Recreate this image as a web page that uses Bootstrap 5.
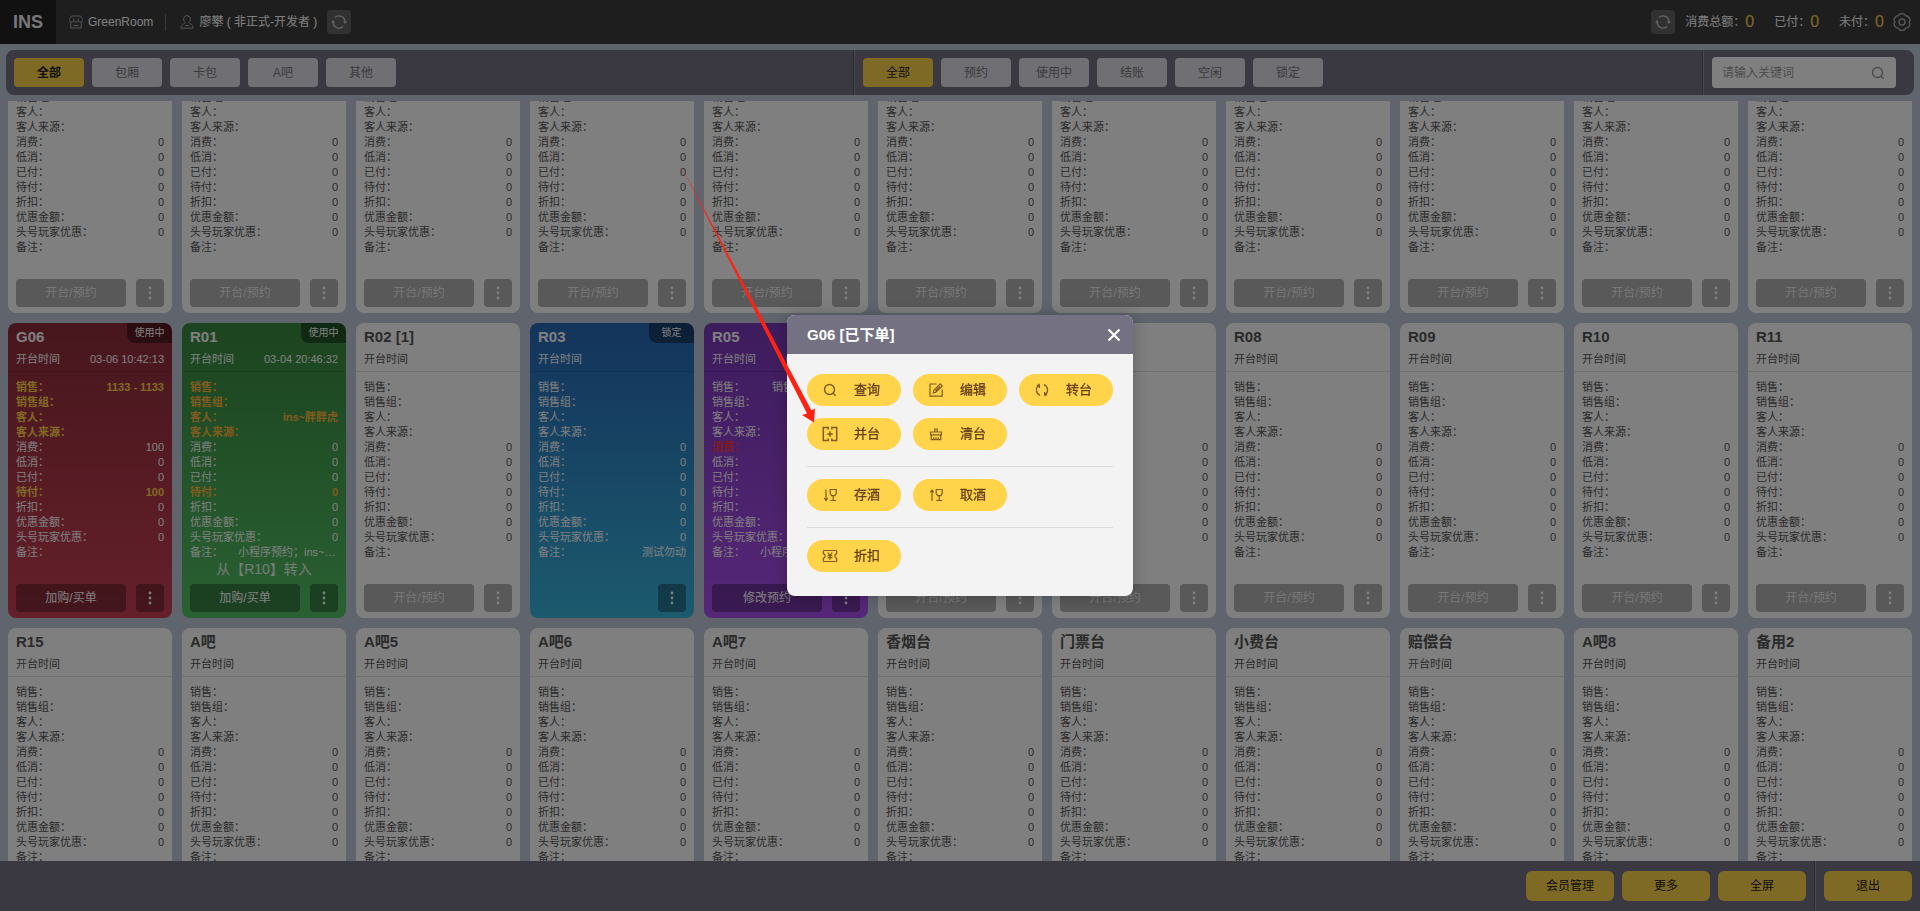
<!DOCTYPE html>
<html lang="zh-CN">
<head>
<meta charset="utf-8">
<meta name="viewport" content="width=device-width, initial-scale=1">
<title>INS GreenRoom</title>
<link rel="stylesheet" href="https://cdn.jsdelivr.net/npm/bootstrap@5.3.0/dist/css/bootstrap.min.css">
<style>
  body { font-family: "Liberation Sans", "Noto Sans CJK SC", sans-serif; font-size: 12px; line-height: 18px; background: #c0c8da; color: #555; }
  svg { display: block; fill: none; stroke: currentColor; }
  .btn { font-size: 12px; line-height: 18px; padding: 0; border: 0; }

  .topbar { height: 44px; background: #3c3c3c; color: #fff; }
  .brand { width: 56px; background: #222; font-size: 18px; color: #eee; }
  .store { gap: 4px; padding: 0 12px; }
  .account { gap: 5px; padding: 0 10px 0 14px; }
  .v-line { width: 1px; height: 17px; background: #777; }
  .icon-soft { color: #aaa; }
  .btn-reload { width: 24px; height: 24px; border-radius: 4px; background: #636363; color: #c4c4c4; }
  .btn-reload:hover { background: #707070; color: #fff; }
  .amount { font-size: 16px; color: #ffd44b; }
  .sums { gap: 20px; padding: 0 8px 0 10px; }

  .filterbar { height: 45px; margin: 6px; border-radius: 8px; background: #747285; }
  .filter-group { flex: 1; padding: 0 8px; }
  .divide { border-left: 1px solid #55545f; box-shadow: inset 1px 0 #94939c; }
  .filter-group.divide, .search-group { padding-left: 9px; }
  .search-group { padding-right: 18px; }
  .btn-filter { width: 70px; height: 29px; border-radius: 4px; background: #dedee8; color: #777; }
  .btn-filter.active, .btn-foot { background: #ffd44b; color: #222; }
  .search-box { width: 184px; height: 31px; border-radius: 4px; background: #fff; padding: 0 10px; }
  .search-box input { font-size: 12px; padding: 0; border: 0; background: none; }
  .search-box input::placeholder { color: #999; }

  .board { overflow-y: auto; scrollbar-width: none; padding: 0 8px; }
  .board::-webkit-scrollbar { display: none; }
  .board-grid { display: grid; grid-template-columns: repeat(auto-fill, minmax(164px, 1fr)); gap: 10px; }
  .room { height: 295px; border-radius: 8px; background: #fff; font-size: 11px; line-height: 15px; overflow: hidden; position: relative; }
  .room-head { padding: 1px 8px 2px; border-bottom: 1px solid #e2e2e2; }
  .room-name { font-size: 15px; line-height: 26px; font-weight: 700; margin: 0; }
  .room-time { line-height: 19px; }
  .room-body { padding: 8px 8px 0; }
  .room-body dt, .room-body dd { margin: 0; font-weight: 400; }
  .room-body .strong dt, .room-body .strong dd { font-weight: 700; }
  .room-body dd { max-width: 100px; }
  .room-foot { padding: 0 8px 6px; gap: 10px; }
  .room-note { font-size: 14px; line-height: 18px; text-align: center; opacity: .9; }
  .room-state { position: absolute; top: 0; right: 0; width: 45px; height: 20px; line-height: 19px; font-size: 10px; text-align: center; background: rgba(0,0,0,.4); border-radius: 0 8px 0 8px; }
  .btn-room, .btn-dots { height: 28px; border-radius: 4px; background: #b2b2b2; color: #fff; }
  .btn-room { color: #eee; }
  .btn-dots { width: 28px; }
  .tone-red, .tone-green, .tone-blue, .tone-purple { color: #fff; --mark: #ffd44b; }
  .tone-red { background: linear-gradient(#8e2d3a, #ca4055); }
  .tone-green { background: linear-gradient(#38883f, #54c266); --mark: #ffb83c; }
  .tone-blue { background: linear-gradient(#2868b8, #38b4dc); }
  .tone-purple { background: linear-gradient(#7a38ba, #ac4ef0); --mark: #ff3b3b; }
  [class*="tone-"] .room-head { border-color: rgba(0,0,0,.12); }
  [class*="tone-"] .btn { background: rgba(0,0,0,.32); color: #fff; }
  .strong { color: var(--mark); }

  .footbar { height: 50px; background: #747285; }
  .btn-foot { width: 88px; height: 30px; border-radius: 6px; }
  .foot-main { padding: 10px 8px; gap: 8px; }
  .foot-exit { padding: 10px 8px 10px 9px; }

  .modal-backdrop.show { opacity: .5; }
  .modal-dialog { max-width: 346px; }
  .modal-content { border: 0; border-radius: 8px; background: #f3f3f3; box-shadow: 0 0 16px rgba(0,0,0,.25); }
  .modal-header { height: 39px; padding: 0 12px 0 20px; border: 0; border-radius: 8px 8px 0 0; background: #737182; color: #fff; }
  .modal-title { font-size: 15px; line-height: 20px; font-weight: 700; }
  .modal-body { padding: 20px 20px 24px; }
  .btn-act { display: flex; align-items: center; gap: 16px; width: 94px; height: 32px; padding-left: 15px; border-radius: 16px; background: #ffd44b; color: #65401c; font-size: 13px; -webkit-text-stroke: 0.3px; }
  .btn-act svg { color: #805a1e; }
  .act-row { gap: 12px; }
  .act-row + .act-row { margin-top: 16px; padding-top: 12px; border-top: 1px solid #dcdcdc; }
  .pointer-arrow { position: absolute; left: -109px; top: -154px; pointer-events: none; }
</style>
</head>
<body class="d-flex flex-column vh-100 overflow-hidden">

<svg class="d-none" aria-hidden="true">
  <symbol id="i-reload" viewBox="0 0 16 16"><path d="M3.800 3.500A6.100 6.100 0 0 1 14 8M12.200 12.500A6.100 6.100 0 0 1 2 8" stroke-width="1.400"/><path d="M0 8.800L2 6l2.100 2.800zM11.900 7.200H16L14 10z" fill="currentColor" stroke="none"/></symbol>
  <symbol id="i-search" viewBox="0 0 16 16"><circle cx="7.500" cy="7.500" r="5" stroke-width="1.400"/><path d="M11 11.200l2.600 2.500" stroke-width="1.400"/></symbol>
  <symbol id="i-dots" viewBox="0 0 16 16"><g fill="currentColor" stroke="none"><circle cx="8" cy="3" r="1.400"/><circle cx="8" cy="8" r="1.400"/><circle cx="8" cy="13" r="1.400"/></g></symbol>
</svg>

<header class="topbar d-flex align-items-center flex-shrink-0">
  <div class="brand h-100 d-flex align-items-center justify-content-center fw-bold">INS</div>
  <div class="store d-flex align-items-center">
    <svg class="icon-soft" width="16" height="16" viewBox="0 0 16 16"><path d="M3.500 2h9l2 3.500v1c0 1-.9 1.700-2.100 1.700S10.200 7.500 10.200 6.500c0 1-1 1.700-2.200 1.700s-2.200-.7-2.200-1.700c0 1-1 1.700-2.200 1.700S1.500 7.500 1.500 6.500v-1zM5.800 6.500V4.500M10.200 6.500V4.500M2.800 8.300V14h10.400V8.300M5.500 11.500h5"/></svg>
    <span>GreenRoom</span>
  </div>
  <span class="v-line"></span>
  <div class="account d-flex align-items-center">
    <svg class="icon-soft" width="14" height="16" viewBox="0 0 14 16"><path d="M5.300 8.500C4 7.500 3.600 6.300 3.600 5a3.400 3.400 0 0 1 6.800 0c0 1.300-.4 2.500-1.700 3.500M5.300 8.500c0 1.300-4.300 1.200-4.300 5.700h12c0-4.500-4.300-4.400-4.300-5.700M5 11.500h4"/></svg>
    <span>廖攀 ( 非正式-开发者 )</span>
  </div>
  <button class="btn btn-reload d-flex align-items-center justify-content-center" type="button" aria-label="刷新账号"><svg width="16" height="16"><use href="#i-reload"/></svg></button>
  <button class="btn btn-reload d-flex align-items-center justify-content-center ms-auto" type="button" aria-label="刷新金额"><svg width="16" height="16"><use href="#i-reload"/></svg></button>
  <div class="sums d-flex">
    <span class="d-flex align-items-center">消费总额：<b class="amount fw-normal">0</b></span>
    <span class="d-flex align-items-center">已付：<b class="amount fw-normal">0</b></span>
    <span class="d-flex align-items-center">未付：<b class="amount fw-normal">0</b></span>
  </div>
  <button class="btn icon-soft me-2" type="button" aria-label="设置"><svg width="20" height="20" viewBox="0 0 20 20" stroke-width="1.500"><path d="M6.350 3.700a4.200 4.200 0 0 1 7.300 0a4.200 4.200 0 0 1 3.650 6.300a4.200 4.200 0 0 1-3.650 6.300a4.200 4.200 0 0 1-7.300 0a4.200 4.200 0 0 1-3.650-6.300a4.200 4.200 0 0 1 3.650-6.300z"/><circle cx="10" cy="10" r="3"/></svg></button>
</header>

<nav class="filterbar d-flex flex-shrink-0">
  <div class="filter-group d-flex align-items-center gap-2">
    <button class="btn btn-filter active fw-bold" type="button">全部</button>
    <button class="btn btn-filter" type="button">包厢</button>
    <button class="btn btn-filter" type="button">卡包</button>
    <button class="btn btn-filter" type="button">A吧</button>
    <button class="btn btn-filter" type="button">其他</button>
  </div>
  <div class="filter-group divide d-flex align-items-center gap-2">
    <button class="btn btn-filter active" type="button">全部</button>
    <button class="btn btn-filter" type="button">预约</button>
    <button class="btn btn-filter" type="button">使用中</button>
    <button class="btn btn-filter" type="button">结账</button>
    <button class="btn btn-filter" type="button">空闲</button>
    <button class="btn btn-filter" type="button">锁定</button>
  </div>
  <form class="search-group divide d-flex align-items-center" role="search">
    <label class="search-box d-flex align-items-center">
      <input class="form-control shadow-none" type="search" placeholder="请输入关键词" aria-label="关键词">
      <svg class="flex-shrink-0" width="16" height="16" color="#999"><use href="#i-search"/></svg>
    </label>
  </form>
</nav>

<main class="board flex-grow-1" id="board"><div class="board-grid" id="grid"></div></main>

<footer class="footbar d-flex justify-content-end flex-shrink-0">
  <div class="foot-main d-flex">
    <button class="btn btn-foot" type="button">会员管理</button>
    <button class="btn btn-foot" type="button">更多</button>
    <button class="btn btn-foot" type="button">全屏</button>
  </div>
  <div class="foot-exit divide"><button class="btn btn-foot" type="button">退出</button></div>
</footer>

<div class="modal-backdrop show"></div>
<div class="modal show d-block" tabindex="-1" role="dialog" aria-labelledby="dlgTitle">
  <div class="modal-dialog modal-dialog-centered my-0 min-vh-100">
    <div class="modal-content">
      <div class="modal-header">
        <h2 class="modal-title" id="dlgTitle">G06 [已下单]</h2>
        <button class="btn text-white" type="button" aria-label="关闭"><svg width="14" height="14" viewBox="0 0 14 14" stroke-width="2.200"><path d="M1.500 1.500l11 11M12.500 1.500l-11 11"/></svg></button>
      </div>
      <div class="modal-body">
        <div class="act-row d-flex flex-wrap">
          <button class="btn btn-act" type="button"><svg width="16" height="16"><use href="#i-search"/></svg>查询</button>
          <button class="btn btn-act" type="button"><svg width="16" height="16" viewBox="0 0 16 16" stroke-width="1.200"><path d="M8.500 2H2v12.200h12.200V7.500M5.300 10.900l.6-2.600 6.300-6.400 2.100 2-6.400 6.400zM7.500 9l4.500-4.600"/></svg>编辑</button>
          <button class="btn btn-act" type="button"><svg width="16" height="16" viewBox="0 0 16 16" stroke-width="1.300"><path d="M6.200 13.300A5.600 5.600 0 0 1 5 3.300M9.800 2.700A5.600 5.600 0 0 1 11 12.700M2.800 3.300H5.400V6M13.200 12.700H10.600V10M4.600 1.800l.8 1.500M11.400 14.200l-.8-1.500"/></svg>转台</button>
          <button class="btn btn-act" type="button"><svg width="16" height="16" viewBox="0 0 16 16" stroke-width="1.500"><path d="M6.200 3.500V1.500H1.300v13h4.900v-2M9.800 3.500V1.500h4.900v13H9.800v-2M8 5.300v5.400M5.300 8h5.400"/></svg>并台</button>
          <button class="btn btn-act" type="button"><svg width="16" height="16" viewBox="0 0 16 16" stroke-width="1.200"><path d="M6.800 6V3h2.400v3M2.600 8.900V6h10.800v2.900M2 8.900h12M3.200 8.900v4.700h9.600V8.900M5.700 13.500v-2.200M8 13.500v-2.200M10.300 13.500v-2.200"/></svg>清台</button>
        </div>
        <div class="act-row d-flex">
          <button class="btn btn-act" type="button"><svg width="16" height="16" viewBox="0 0 16 16" stroke-width="1.200"><path d="M4 2.500v11M2.200 11L4 13.500 5.800 11M8.200 2.500h6v4l-1.400 2.200H9.600L8.200 6.500zM11.200 8.700v4.500M8.200 13.500h6"/></svg>存酒</button>
          <button class="btn btn-act" type="button"><svg width="16" height="16" viewBox="0 0 16 16" stroke-width="1.200"><path d="M4 14V3M2.200 5.500L4 3l1.800 2.500M8.200 2.500h6v4l-1.400 2.200H9.600L8.200 6.500zM11.200 8.700v4.500M8.200 13.500h6"/></svg>取酒</button>
        </div>
        <div class="act-row d-flex">
          <button class="btn btn-act" type="button"><svg width="16" height="16" viewBox="0 0 16 16" stroke-width="1.200"><path d="M2.300 2.500h11.400q1 0 1 1v2.100a2.500 2.500 0 0 0 0 4.800v2.100q0 1-1 1H2.300q-1 0-1-1v-2.100a2.500 2.500 0 0 0 0-4.800V3.500q0-1 1-1zM5.800 4.700L8 7.300l2.200-2.600M8 7.300v4.400M5.600 7.700h4.800M5.600 9.700h4.800"/></svg>折扣</button>
        </div>
      </div>
      <svg class="pointer-arrow" width="140" height="264" viewBox="0 0 140 264"><path d="M1 1L133.500 249.500 137 247.500 136 261.500 124 254 129 252.500z" fill="#ff2213" stroke="none"/></svg>
    </div>
  </div>
</div>

<script src="https://cdn.jsdelivr.net/npm/bootstrap@5.3.0/dist/js/bootstrap.bundle.min.js"></script>
<script>
  const fields = ['销售', '销售组', '客人', '客人来源', '消费', '低消', '已付', '待付', '折扣', '优惠金额', '头号玩家优惠', '备注'];
  const zeroed = ['消费', '低消', '已付', '待付', '折扣', '优惠金额', '头号玩家优惠'];
  const guest = ['销售', '销售组', '客人', '客人来源', '待付'];
  const booked = '小程序预约；ins~胖胖虎';

  const rooms = [
    'K01', 'K02', 'K03', 'K05', 'K06', 'K07', 'G01', 'G02', 'G03', 'G04', 'G05',
    { name: 'G06', tone: 'red', state: '使用中', time: '03-06 10:42:13', action: '加购/买单', strong: guest,
      values: { '销售': '1133 - 1133', '消费': '100', '待付': '100' } },
    { name: 'R01', tone: 'green', state: '使用中', time: '03-04 20:46:32', action: '加购/买单', strong: guest,
      note: '从【R10】转入', values: { '客人': 'ins~胖胖虎', '备注': booked } },
    'R02 [1]',
    { name: 'R03', tone: 'blue', state: '锁定', action: '', values: { '备注': '测试勿动' } },
    { name: 'R05', tone: 'purple', state: '预约', time: '03-06 21:00:00', action: '修改预约', strong: ['消费'],
      values: { '销售': '销售一组销售经理', '备注': booked } },
    'R06', 'R07', 'R08', 'R09', 'R10', 'R11',
    'R15', 'A吧', 'A吧5', 'A吧6', 'A吧7', '香烟台', '门票台', '小费台', '赔偿台', 'A吧8', '备用2'
  ];

  const roomCard = item => {
    const r = typeof item === 'string' ? { name: item } : item;
    const { tone, state, time = '', action = '开台/预约', note = '', strong = [], values = {} } = r;
    const rows = fields.map(f => `
      <div class="d-flex justify-content-between ${strong.includes(f) ? 'strong' : ''}">
        <dt class="text-nowrap">${f}：</dt><dd class="text-truncate">${values[f] ?? (zeroed.includes(f) ? '0' : '')}</dd>
      </div>`).join('');
    return `<article class="room d-flex flex-column ${tone ? 'tone-' + tone : ''}">
      ${state ? `<span class="room-state">${state}</span>` : ''}
      <div class="room-head">
        <h3 class="room-name">${r.name}</h3>
        <div class="room-time d-flex justify-content-between"><span>开台时间</span><span>${time}</span></div>
      </div>
      <dl class="room-body mb-0">${rows}</dl>
      ${note ? `<div class="room-note">${note}</div>` : ''}
      <div class="room-foot d-flex justify-content-end mt-auto">
        ${action ? `<button class="btn btn-room flex-grow-1" type="button">${action}</button>` : ''}
        <button class="btn btn-dots d-flex align-items-center justify-content-center" type="button" aria-label="更多操作"><svg width="16" height="16"><use href="#i-dots"/></svg></button>
      </div>
    </article>`;
  };

  document.getElementById('grid').innerHTML = rooms.map(roomCard).join('');
  document.getElementById('board').scrollTop = 83;
</script>
</body>
</html>
